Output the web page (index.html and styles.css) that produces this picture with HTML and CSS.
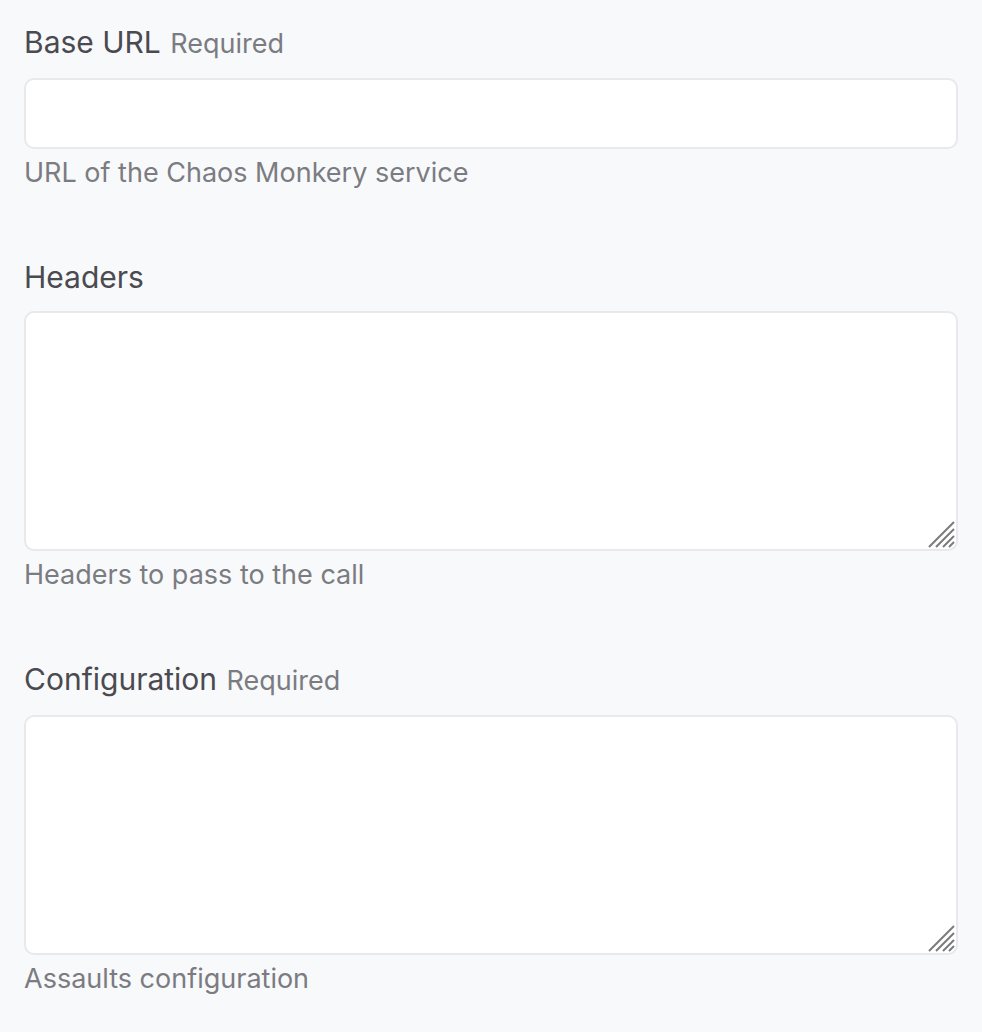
FILE: index.html
```html
<!DOCTYPE html>
<html>
<head>
<meta charset="utf-8">
<link rel="stylesheet" href="styles.css">
</head>
<body>
<form class="form">
  <div class="field">
    <label class="label">Base URL <span class="req">Required</span></label>
    <input class="input" type="text">
    <div class="help">URL of the Chaos Monkery service</div>
  </div>
  <div class="field">
    <label class="label">Headers</label>
    <div class="ta-wrap">
      <textarea class="textarea"></textarea>
      <svg class="grip" width="28" height="28" viewBox="0 0 28 28"><g stroke="#7a7a7a" stroke-width="2"><line x1="2" y1="27" x2="27" y2="2"/><line x1="9" y1="27" x2="27" y2="9"/><line x1="16" y1="27" x2="27" y2="16"/><line x1="22" y1="27" x2="27" y2="22"/></g></svg>
    </div>
    <div class="help">Headers to pass to the call</div>
  </div>
  <div class="field">
    <label class="label">Configuration <span class="req">Required</span></label>
    <div class="ta-wrap">
      <textarea class="textarea"></textarea>
      <svg class="grip" width="28" height="28" viewBox="0 0 28 28"><g stroke="#7a7a7a" stroke-width="2"><line x1="2" y1="27" x2="27" y2="2"/><line x1="9" y1="27" x2="27" y2="9"/><line x1="16" y1="27" x2="27" y2="16"/><line x1="22" y1="27" x2="27" y2="22"/></g></svg>
    </div>
    <div class="help">Assaults configuration</div>
  </div>
</form>
</body>
</html>
```
FILE: styles.css
```css
html, body {
  margin: 0;
  padding: 0;
  background: #f8f9fb;
}
body {
  font-family: Inter, "Liberation Sans", sans-serif;
  color: #4a4a50;
}
.form {
  display: flex;
  flex-direction: column;
  gap: 69px;
  padding: 24px 24px 0 24px;
}
.field {
  display: flex;
  flex-direction: column;
}
.label {
  display: block;
  font-size: 30px;
  line-height: 36px;
  margin-bottom: 16px;
  color: #4a4a50;
}
.req {
  font-size: 27px;
  color: #7b7c82;
  margin-left: 1px;
}
.input, .textarea {
  box-sizing: border-box;
  width: 100%;
  border: 2px solid #e8e9ec;
  border-radius: 10px;
  background: #fff;
  margin: 0;
  display: block;
  outline: none;
  font-family: inherit;
}
.input {
  height: 71px;
}
.ta-wrap {
  position: relative;
}
.textarea {
  height: 240px;
  resize: none;
}
.grip {
  position: absolute;
  right: 3px;
  bottom: 3px;
}
.help {
  margin-top: 7px;
  font-size: 27px;
  line-height: 34px;
  color: #7b7c82;
}
```
